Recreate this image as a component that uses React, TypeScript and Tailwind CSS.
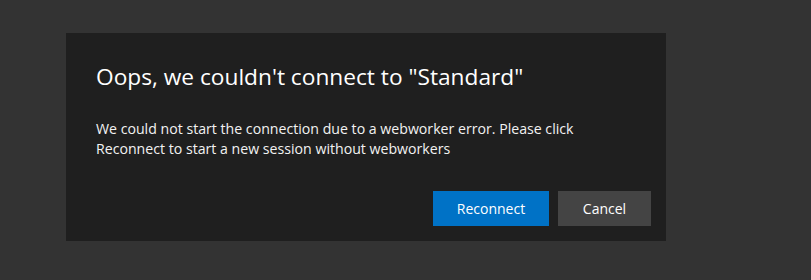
export default function App() {
  return (
    <div className="h-[280px] w-full bg-[#333333] pt-[33px] pl-[66px]" style={{ fontFamily: '"Open Sans", "Noto Sans", sans-serif' }}>
      <div className="flex h-[208px] w-[600px] flex-col bg-[#1f1f1f] pl-[30px] pr-[15px]">
        <h1 className="mt-[28px] text-[22.7px] leading-[32px] font-normal text-white">Oops, we couldn't connect to "Standard"</h1>
        <p className="mt-[26px] pr-[15px] text-[14.15px] leading-[20px] text-[#f2f2f2]">
          We could not start the connection due to a webworker error. Please click Reconnect to start a new session without webworkers
        </p>
        <div className="mt-auto mb-[15px] flex justify-end gap-[9px]">
          <button className="h-[35px] w-[116px] bg-[#0072c6] text-[14px] text-white">Reconnect</button>
          <button className="h-[35px] w-[93px] bg-[#444444] text-[14px] text-white">Cancel</button>
        </div>
      </div>
    </div>
  );
}
